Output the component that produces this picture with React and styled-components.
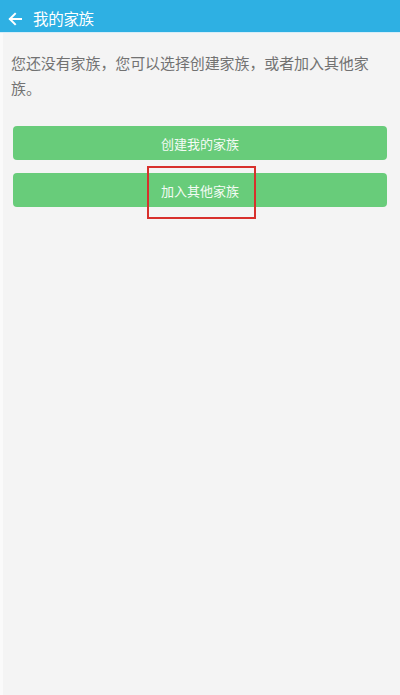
import React from "react";
import styled, { createGlobalStyle } from "styled-components";

const Global = createGlobalStyle`
  html, body { margin: 0; padding: 0; background: #f4f4f4; }
  body { font-family: "Noto Sans CJK SC", "Noto Sans", sans-serif; }
  #root { min-height: 695px; }
`;

const Page = styled.div`
  display: flex;
  flex-direction: column;
  min-height: 695px;
  background: #f4f4f4;
  border-left: 3px solid #fafafa;
  box-sizing: border-box;
`;

const Header = styled.header`
  display: flex;
  align-items: center;
  gap: 11px;
  height: 33px;
  padding: 6px 0 0 8px;
  box-sizing: border-box;
  background: #2eb0e3;
  border-bottom: 1px solid #d6edf8;
  margin-left: -3px;
`;

const Title = styled.h1`
  margin: 0;
  font-size: 15.5px;
  font-weight: 400;
  color: #ffffff;
  line-height: 1;
  letter-spacing: -0.3px;
`;

const Intro = styled.p`
  margin: 17px 0 0;
  padding: 0 20px 0 8px;
  font-size: 15px;
  line-height: 25px;
  color: #727272;
  letter-spacing: -0.1px;
`;

const Actions = styled.div`
  display: flex;
  flex-direction: column;
  gap: 13px;
  padding: 0 13px 0 10px;
  margin-top: 26px;
`;

const Button = styled.button`
  position: relative;
  display: flex;
  align-items: center;
  justify-content: center;
  height: 34px;
  border: none;
  border-radius: 4px;
  background: #68cc7a;
  color: #f4fbf5;
  font-family: inherit;
  font-size: 13px;
  padding: 0;
  cursor: pointer;
`;

const Highlight = styled.span`
  position: absolute;
  left: 134px;
  top: -7px;
  width: 109px;
  height: 53px;
  border: 2px solid #d8302c;
  box-sizing: border-box;
  pointer-events: none;
`;

const BackArrow = () => (
  <svg width="14" height="14" viewBox="0 0 14 14" fill="none">
    <path d="M13 7H2M7 1.8L1.8 7L7 12.2" stroke="#fff" strokeWidth="2" strokeLinecap="square" />
  </svg>
);

export default function App() {
  return (
    <>
      <Global />
      <Page>
        <Header>
          <BackArrow />
          <Title>我的家族</Title>
        </Header>
        <Intro>您还没有家族，您可以选择创建家族，或者加入其他家族。</Intro>
        <Actions>
          <Button>创建我的家族</Button>
          <Button>
            加入其他家族
            <Highlight />
          </Button>
        </Actions>
      </Page>
    </>
  );
}
